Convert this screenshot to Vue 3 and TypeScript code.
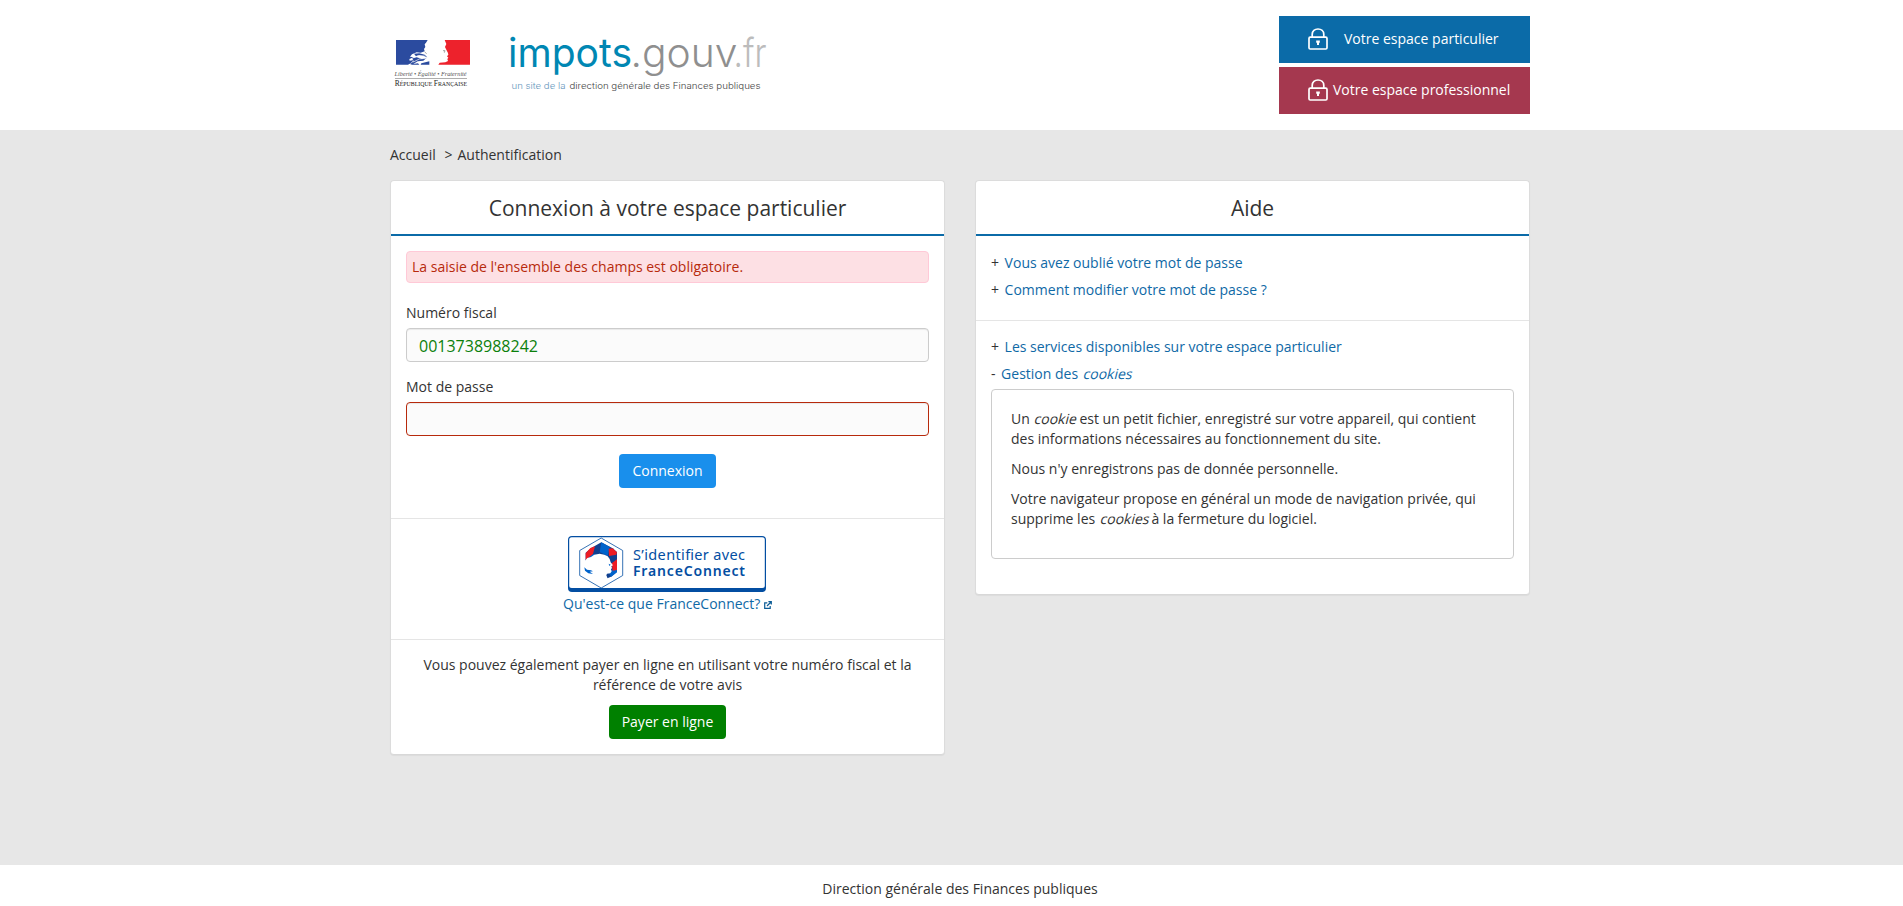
<script setup lang="ts">
import { ref } from 'vue'

const spaces = [
  { label: 'Votre espace particulier', kind: 'personal' },
  { label: 'Votre espace professionnel', kind: 'business' },
]
const fiscalNumber = ref('0013738988242')
const password = ref('')
const passwordHelp = ['Vous avez oublié votre mot de passe', 'Comment modifier votre mot de passe ?']
</script>

<template>
  <div class="page">
    <header class="top">
      <div class="container top-row">
        <svg class="brand" width="390" height="90" viewBox="0 0 390 90">
          <g transform="scale(.33333)">
            <path fill="#2b4b9f" d="M18 60H113L108 68 104 73 106 81 102 87 104 94 92 98 80 97 66 103 60 110 72 112 58 117 59 122 72 120 62 130 54 134H18Z" />
            <path fill="#2b4b9f" d="M72 101 88 100 104 104 112 112 104 109 88 106 78 109ZM66 115 80 112 96 117 110 113 100 122 83 124 70 132 84 130 88 134H66L60 132 72 124ZM94 130 118 124V134H92Z" />
            <path fill="none" stroke="#fff" stroke-width="2" d="M64 116 84 107 104 108M70 126 88 117 108 115" />
            <path fill="#ed222c" d="M164 60H240V134H145L149 128 166 127 174 123 172 117 175 113 171 109 175 104 174 99 169 89 165 81 169 72Z" />
            <path fill="none" stroke="#777" stroke-width="2" d="M159 92 165 92 163 98M104 96 110 101" />
          </g>
          <text class="motto" x="4.6" y="56" textLength="72" lengthAdjust="spacingAndGlyphs">Liberté • Égalité • Fraternité</text>
          <path d="M5 58.5H77" stroke="#999" stroke-width=".8" />
          <text class="republic" x="4.8" y="66.2" textLength="72.3" lengthAdjust="spacingAndGlyphs">R<tspan class="small">ÉPUBLIQUE </tspan>F<tspan class="small">RANÇAISE</tspan></text>
          <g class="wordmark">
            <text class="w-impots" x="118" y="47.4" textLength="124" lengthAdjust="spacingAndGlyphs">impots</text>
            <text class="w-gouv" x="240.5" y="47.4" textLength="107" lengthAdjust="spacingAndGlyphs">.gouv</text>
            <text class="w-fr" x="343.5" y="47.4" textLength="33" lengthAdjust="spacingAndGlyphs">.fr</text>
          </g>
          <text class="sub sub-light" x="121.5" y="69" textLength="54" lengthAdjust="spacingAndGlyphs">un site de la</text>
          <text class="sub" x="179.5" y="69" textLength="191" lengthAdjust="spacingAndGlyphs">direction générale des Finances publiques</text>
        </svg>
        <nav class="spaces">
          <a v-for="s in spaces" :key="s.kind" class="space" :class="s.kind">
            <svg width="20" height="22" viewBox="0 0 20 22" fill="none" stroke="#fff" stroke-width="1.7">
              <rect x="1" y="9.2" width="18" height="11.8" rx="1.2" />
              <path d="M4.2 9V6.4C4.2 3 6.8 1 10 1S15.8 3 15.8 6.4V9" />
              <path d="M8.2 12.4h3.6v2.4H11V17H9v-2.2h-.8Z" fill="#fff" stroke="none" />
            </svg>
            <span>{{ s.label }}</span>
          </a>
        </nav>
      </div>
    </header>

    <main class="container main">
      <div class="crumbs"><span>Accueil</span><span class="sep">&gt;</span><span>Authentification</span></div>
      <div class="columns">
        <section class="card">
          <h1>Connexion à votre espace particulier</h1>
          <form class="block login" @submit.prevent>
            <div class="alert">La saisie de l'ensemble des champs est obligatoire.</div>
            <label for="fiscal">Numéro fiscal</label>
            <input id="fiscal" v-model="fiscalNumber" type="text" />
            <label for="password">Mot de passe</label>
            <input id="password" v-model="password" class="invalid" type="password" />
            <button class="btn connect" type="submit">Connexion</button>
          </form>
          <div class="block connect-block">
            <a class="fc">
              <svg width="198" height="56" viewBox="0 0 198 56">
                <rect width="198" height="56" rx="4" fill="#034ea2" />
                <rect x="1.2" y="1.2" width="195.6" height="50.8" rx="2.5" fill="#fff" />
                <path d="M33.2 2 54.7 14.5V39.5L33.2 52 11.7 39.5V14.5Z" fill="#fff" stroke="#034ea2" stroke-width=".8" />
                <g transform="translate(-3 -6) scale(.33333)">
                  <path fill="#10408f" d="M109 37 143 55 156 66V125L138 140 120 148 62 110V68L80 53Z" />
                  <path fill="#0063cb" d="M109 37 134 51 128 78 104 66ZM62 88 84 72 100 76 66 112ZM143 118 156 120V127L138 141 132 128Z" />
                  <path fill="#ed1c24" d="M76 54 90 49 84 72 62 90V70ZM131 56 143 55 156 67 154 74 132 78ZM156 88V120L143 122 140 100Z" />
                  <path fill="#fff" d="M60 92 67 84 78 81 88 74 104 71 118 74 128 79 134 87 137 97 144 106 139 109 141 114 138 118 140 124 136 130 126 131 124 136 130 151 104 162 58 136Z" />
                  <path fill="#0063cb" d="M58 112 66 119 78 121 84 124 74 125 84 132 70 130 60 122ZM131 101 137 104 133 108Z" />
                </g>
                <text class="fc-line" x="65" y="24" textLength="112" lengthAdjust="spacing">S’identifier avec</text>
                <text class="fc-line fc-bold" x="65" y="40" textLength="112" lengthAdjust="spacing">FranceConnect</text>
              </svg>
            </a>
            <a class="link fc-link">Qu'est-ce que FranceConnect?
              <svg width="8" height="8" viewBox="0 0 8 8" fill="none" stroke="#0b5c96" stroke-width="1.2">
                <path d="M3.3 1.8H.7v5.5h5.5V5M3 5 7 1M4.4.7h2.9v2.9" />
              </svg>
            </a>
          </div>
          <div class="block pay">
            <p>Vous pouvez également payer en ligne en utilisant votre numéro fiscal et la référence de votre avis</p>
            <button class="btn pay-btn" type="button">Payer en ligne</button>
          </div>
        </section>

        <section class="card">
          <h1>Aide</h1>
          <ul class="block help">
            <li v-for="q in passwordHelp" :key="q"><span class="mark">+</span><a class="link">{{ q }}</a></li>
          </ul>
          <div class="block help last">
            <div><span class="mark">+</span><a class="link">Les services disponibles sur votre espace particulier</a></div>
            <div><span class="mark">-</span><a class="link">Gestion des <em>cookies</em></a></div>
            <div class="well">
              <p>Un <em>cookie</em> est un petit fichier, enregistré sur votre appareil, qui contient des informations nécessaires au fonctionnement du site.</p>
              <p>Nous n'y enregistrons pas de donnée personnelle.</p>
              <p>Votre navigateur propose en général un mode de navigation privée, qui supprime les <em>cookies</em> à la fermeture du logiciel.</p>
            </div>
          </div>
        </section>
      </div>
    </main>

    <footer class="footer">Direction générale des Finances publiques</footer>
  </div>
</template>

<style>
body { margin: 0; background: #fff; }
</style>

<style scoped>
* { box-sizing: border-box; }
.page {
  display: flex;
  flex-direction: column;
  height: 906px;
  overflow: hidden;
  background: #e7e7e7;
  color: #333;
  font: 14px/20px "Open Sans", "Noto Sans", sans-serif;
}
.container { width: 1140px; margin-left: 390px; }
.top { flex: none; height: 130px; background: #fff; }
.top-row { display: flex; justify-content: space-between; }
.brand { margin-top: 20px; }
.motto { font: italic 6.8px "Liberation Serif", serif; fill: #555; }
.republic { font: 8.2px "Liberation Serif", serif; fill: #222; }
.small { font-size: 6.4px; }
.wordmark { font: 300 40.5px Inter, sans-serif; }
.w-impots { fill: #0087b3; font-weight: 400; }
.w-gouv { fill: #8f8f8f; }
.w-fr { fill: #bcbcbc; }
.sub { font: 300 9px Inter, sans-serif; fill: #444; }
.sub-light { fill: #6797bc; }
.spaces { display: flex; flex-direction: column; gap: 4px; margin-top: 16px; }
.space {
  display: flex;
  align-items: center;
  width: 251px;
  height: 47px;
  padding: 0 0 2px 29px;
  color: #fff;
}
.space svg { flex: none; }
.personal { background: #0b6ba8; }
.personal span { margin-left: 16px; }
.business { background: #a5384f; }
.business span { margin-left: 5px; }
.main { flex: 1; }
.crumbs { display: flex; padding-top: 15px; height: 50px; }
.sep { margin: 0 5px 0 8.7px; }
.columns { display: grid; grid-template-columns: 555px 555px; gap: 30px; align-items: start; }
.card {
  background: #fff;
  border: 1px solid #dcdcdc;
  border-radius: 4px;
  border-bottom-color: #d8d8d8;
  box-shadow: 0 1px 1px rgba(0, 0, 0, .05);
}
h1 {
  margin: 0;
  height: 55px;
  padding-top: 1px;
  border-bottom: 2px solid #0b6ba8;
  font-size: 21px;
  font-weight: 400;
  line-height: 53px;
  text-align: center;
}
em { display: inline-block; font-style: normal; transform: skewX(-14deg); transform-origin: 0 85%; }
.block { padding: 15px; }
.block + .block { border-top: 1px solid #e5e5e5; }
.login { display: flex; flex-direction: column; padding-bottom: 30px; }
.alert {
  height: 32px;
  margin-bottom: 20px;
  padding: 5px;
  border: 1px solid #ffc9d7;
  border-radius: 4px;
  background: #fde0e4;
  color: #b72a0c;
}
label { margin-bottom: 5px; }
input {
  height: 34px;
  margin-bottom: 15px;
  padding: 2px 12px 0;
  border: 1px solid #ccc;
  border-radius: 4px;
  outline: none;
  background: #fbfbfb;
  box-shadow: inset 0 1px 1px rgba(0, 0, 0, .075);
  color: #0b800b;
  font: 16px "Open Sans", sans-serif;
}
.invalid { margin-bottom: 18px; border-color: #b72a0c; }
.btn {
  height: 34px;
  padding: 0 13px;
  border: 0;
  border-radius: 4px;
  color: #fff;
  font: 14px/20px "Open Sans", sans-serif;
}
.connect { align-self: center; background: #198fec; }
.connect-block { display: flex; flex-direction: column; align-items: center; padding: 17px 15px 25px; }
.fc { margin-right: 1px; }
.fc, .fc svg { display: block; }
.fc-line { font: 400 14.5px "Noto Sans", sans-serif; fill: #034ea2; }
.fc-bold { font-weight: 600; font-size: 14px; }
.link { color: #0f69a6; }
.fc-link { margin-top: 2px; }
.pay { text-align: center; }
.pay p { margin: 0 0 10px; }
.pay-btn { display: block; margin: 0 auto; background: #008000; }
.help { display: flex; flex-direction: column; gap: 7px; margin: 0; padding: 17px 15px 20px; list-style: none; }
.help.last { padding: 16px 15px 35px; }
.mark { margin-right: 5.6px; }
.well { height: 170px; margin-top: -2px; padding: 19px; border: 1px solid #ccc; border-radius: 4px; }
.well p { margin: 0 0 10px; }
.footer { flex: none; height: 41px; padding: 14px 0 0 17px; background: #fff; text-align: center; }
</style>
